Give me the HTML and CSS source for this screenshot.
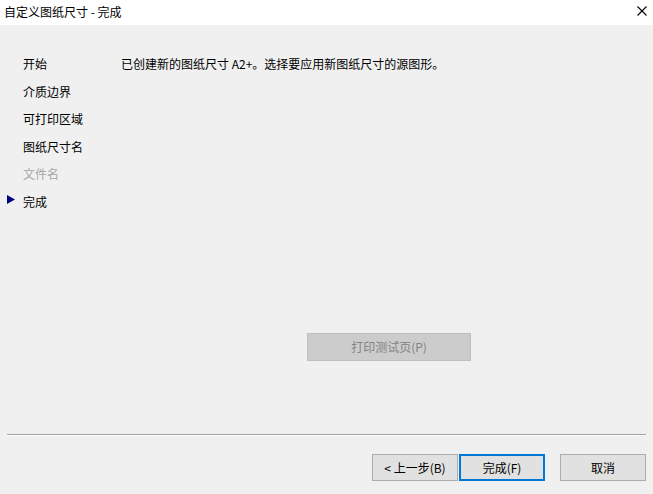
FILE: index.html
```html
<!DOCTYPE html>
<html>
<head>
  <meta charset="utf-8">
  <link rel="stylesheet" href="styles.css">
</head>
<body>
  <div class="titlebar">
    <span class="title">自定义图纸尺寸 - 完成</span>
    <svg class="close" width="10" height="10" viewBox="0 0 10 10">
      <path d="M0.5 0.5 L9.5 9.5 M9.5 0.5 L0.5 9.5" stroke="#000" stroke-width="1.1" fill="none"/>
    </svg>
  </div>

  <div class="window">
    <div class="wizard">
      <ul class="steps">
        <li>开始</li>
        <li>介质边界</li>
        <li>可打印区域</li>
        <li>图纸尺寸名</li>
        <li class="disabled">文件名</li>
        <li class="current">
          <svg class="arrow" width="8" height="9" viewBox="0 0 8 9">
            <path d="M0 0 L8 4.5 L0 9 Z" fill="#000080"/>
          </svg>
          完成
        </li>
      </ul>
      <div class="main">
        <p class="message">已创建新的图纸尺寸 A2+。选择要应用新图纸尺寸的源图形。</p>
        <button class="btn test" disabled>打印测试页(P)</button>
      </div>
    </div>

    <div class="separator"></div>

    <div class="actions">
      <button class="btn">&lt; 上一步(B)</button>
      <button class="btn default">完成(F)</button>
      <button class="btn cancel">取消</button>
    </div>
  </div>
</body>
</html>
```

FILE: styles.css
```css
* {
    margin: 0;
    padding: 0;
    box-sizing: border-box;
}

body {
    width: 653px;
    height: 494px;
    background-color: #f0f0f0;
    font-family: "Noto Sans CJK SC", "Noto Sans", sans-serif;
    font-size: 12px;
    color: #000;
    overflow: hidden;
}

.titlebar {
    height: 25px;
    background-color: #fff;
    display: flex;
    align-items: center;
    justify-content: space-between;
    padding: 0 6px 0 4px;
}

.title {
    font-size: 12px;
    margin-top: -3px;
}

.close {
    margin-top: -3px;
}

.wizard {
    display: flex;
    height: 402px;
    padding-top: 25px;
}

.steps {
    list-style: none;
    width: 121px;
}

.steps li {
    position: relative;
    height: 27.5px;
    line-height: 27.5px;
    padding-left: 23px;
}

.steps li.disabled {
    color: #a6a6a6;
}

.arrow {
    position: absolute;
    left: 7px;
    top: 7px;
}

.main {
    flex: 1;
    display: flex;
    flex-direction: column;
}

.message {
    line-height: 27.5px;
}

.btn {
    font-family: "Noto Sans CJK SC", "Noto Sans", sans-serif;
    font-size: 12px;
    height: 27px;
    width: 86px;
    background-color: #e1e1e1;
    border: 1px solid #adadad;
    color: #000;
}

.btn.test {
    width: 164px;
    height: 28px;
    margin-top: 255px;
    margin-left: 186px;
    background-color: #cccccc;
    border-color: #bfbfbf;
    color: #838383;
}

.separator {
    margin: 7px 7px 0 7px;
    border-top: 1px solid #a0a0a0;
    border-bottom: 1px solid #fff;
}

.actions {
    display: flex;
    justify-content: flex-end;
    padding: 18px 7px 0 0;
}

.btn.default {
    border: 2px solid #0078d7;
    margin-left: 1px;
}

.btn.cancel {
    margin-left: 15px;
}
```
